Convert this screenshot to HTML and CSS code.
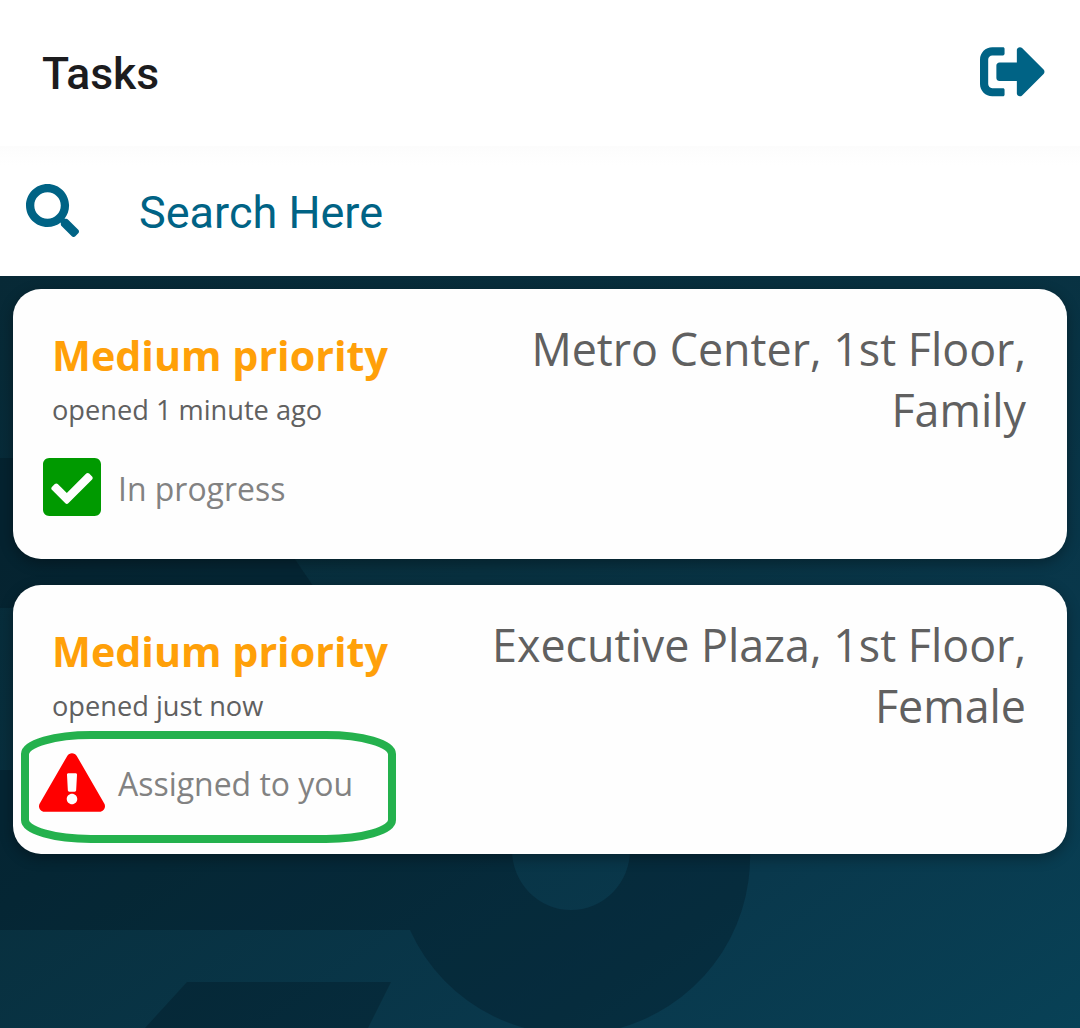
FILE: index.html
```html
<!DOCTYPE html>
<html lang="en">
<head>
<meta charset="utf-8">
<title>Tasks</title>
<link rel="stylesheet" href="styles.css">
</head>
<body>
<header class="header">
  <h1 class="title">Tasks</h1>
  <svg class="signout" viewBox="0 0 512 512"><path d="M497 273L329 441c-15 15-41 4.500-41-17v-96H152c-13.300 0-24-10.700-24-24v-96c0-13.300 10.700-24 24-24h136V88c0-21.400 25.900-32 41-17l168 168c9.300 9.400 9.300 24.600 0 34zM192 436v-40c0-6.600-5.400-12-12-12H96c-17.700 0-32-14.300-32-32V160c0-17.700 14.300-32 32-32h84c6.600 0 12-5.400 12-12V76c0-6.600-5.400-12-12-12H96c-53 0-96 43-96 96v192c0 53 43 96 96 96h84c6.600 0 12-5.400 12-12z"/></svg>
</header>
<div class="search">
  <svg class="search-icon" viewBox="0 0 512 512"><path d="M505 442.700L405.300 343c-4.500-4.500-10.600-7-17-7H372c27.600-35.300 44-79.700 44-128C416 93.100 322.900 0 208 0S0 93.100 0 208s93.100 208 208 208c48.300 0 92.700-16.400 128-44v16.300c0 6.400 2.500 12.500 7 17l99.700 99.700c9.400 9.400 24.600 9.400 33.900 0l28.300-28.300c9.400-9.400 9.400-24.600.1-34zM208 336c-70.700 0-128-57.200-128-128 0-70.700 57.200-128 128-128 70.700 0 128 57.200 128 128 0 70.700-57.200 128-128 128z"/></svg>
  <span class="search-label">Search Here</span>
</div>
<main class="tasks">
  <svg class="backdrop" viewBox="0 0 1080 752" aria-hidden="true">
    <path d="M0 182H204Q255 182 282 264L328 332H0zM0 494H410A178 178 0 1 1 750 574A178 178 0 0 1 410 654H0zM630 574A59 60 0 1 0 512 574A59 60 0 1 0 630 574zM187 706H391L368 752H145z" fill-rule="evenodd"/>
  </svg>
  <article class="card">
    <div class="info">
      <h2 class="priority">Medium priority</h2>
      <p class="opened">opened 1 minute ago</p>
      <div class="status">
        <svg class="status-icon check" viewBox="0 32 448 448"><path d="M400 480H48c-26.510 0-48-21.490-48-48V80c0-26.510 21.490-48 48-48h352c26.510 0 48 21.490 48 48v352c0 26.510-21.490 48-48 48zm-204.686-98.059l184-184c6.248-6.248 6.248-16.379 0-22.627l-22.627-22.627c-6.248-6.248-16.379-6.249-22.628 0L184 302.745l-70.059-70.059c-6.248-6.248-16.379-6.248-22.628 0l-22.627 22.627c-6.248 6.248-6.248 16.379 0 22.627l104 104c6.249 6.250 16.379 6.250 22.628.001z"/></svg>
        <span>In progress</span>
      </div>
    </div>
    <p class="place">Metro Center, 1st Floor, Family</p>
  </article>
  <article class="card">
    <div class="info">
      <h2 class="priority">Medium priority</h2>
      <p class="opened">opened just now</p>
      <div class="status">
        <svg class="status-icon warning" viewBox="0 0 576 512"><path d="M569.517 440.013C587.975 472.007 564.806 512 527.940 512H48.054c-36.937 0-59.999-40.055-41.577-71.987L246.423 23.985c18.467-32.009 64.720-31.951 83.154 0l239.940 416.028zM288 354c-25.405 0-46 20.595-46 46s20.595 46 46 46 46-20.595 46-46-20.595-46-46-46zm-43.673-165.346l7.418 136c.347 6.364 5.609 11.346 11.982 11.346h48.546c6.373 0 11.635-4.982 11.982-11.346l7.418-136c.375-6.874-5.098-12.654-11.982-12.654h-63.383c-6.884 0-12.356 5.780-11.981 12.654z"/></svg>
        <span>Assigned to you</span>
      </div>
    </div>
    <p class="place">Executive Plaza, 1st Floor, Female</p>
    <svg class="highlight" viewBox="0 0 375 112"><rect x="4" y="4" width="367" height="104" rx="66" ry="19"/></svg>
  </article>
</main>
</body>
</html>
```
FILE: styles.css
```css
* { box-sizing: border-box; margin: 0; padding: 0; }
body {
  height: 1028px;
  display: flex;
  flex-direction: column;
  overflow: hidden;
  background: #fff;
  font-family: "Open Sans", sans-serif;
}
svg { display: block; flex: none; }
.header {
  height: 146px;
  padding: 0 34.500px 3px 42px;
  display: flex;
  align-items: center;
  justify-content: space-between;
}
.title { font: 500 44.500px/54px Roboto, sans-serif; color: #1c1c1e; padding-top: 4px; }
.signout { width: 65.5px; height: 65.5px; fill: #006385; }
.search {
  height: 130px;
  padding: 0 26px 1px;
  display: flex;
  align-items: center;
  gap: 60px;
  background: linear-gradient(#fcfcfc, #fefefe 12px, #fff 20px);
}
.search-icon { width: 53px; height: 53px; fill: #006385; }
.search-label { font: 400 45px/54px Roboto, sans-serif; color: #006385; padding-top: 4px; }
.tasks {
  flex: 1;
  position: relative;
  display: flex;
  flex-direction: column;
  gap: 26px;
  padding: 13px;
  background: linear-gradient(145deg, #072936 0%, #08303f 42%, #09384c 75%, #084156 100%);
}
.backdrop { position: absolute; inset: 0; width: 1080px; height: 752px; fill: #001018; fill-opacity: .28; }
.card {
  position: relative;
  height: 269.500px;
  display: flex;
  justify-content: space-between;
  padding: 29px 41px 0 39px;
  border-radius: 28px;
  background: #fefefe;
  box-shadow: 0 4px 14px rgba(0, 0, 0, .32);
}
.info { padding-top: 9px; }
.priority { font-size: 41.250px; line-height: 57px; font-weight: 700; color: #ffa009; white-space: nowrap; }
.opened { font-size: 27.200px; line-height: 38px; margin-top: 7px; color: #606060; }
.status {
  height: 66px;
  margin: 25px 0 0 -13px;
  display: flex;
  align-items: center;
  gap: 13px;
  font-size: 31.950px;
  color: #828282;
}
.status span { padding-top: 2px; }
.status-icon { width: 66px; height: 58px; }
.check { fill: #009a00; }
.warning { height: 59px; fill: #f00; }
.place { width: 580px; font-size: 44.800px; line-height: 61.300px; text-align: right; color: #606060; }
.highlight { position: absolute; left: 8px; top: 146px; width: 375px; height: 112px; overflow: visible; }
.highlight rect { fill: none; stroke: #24b14d; stroke-width: 8; }
```
